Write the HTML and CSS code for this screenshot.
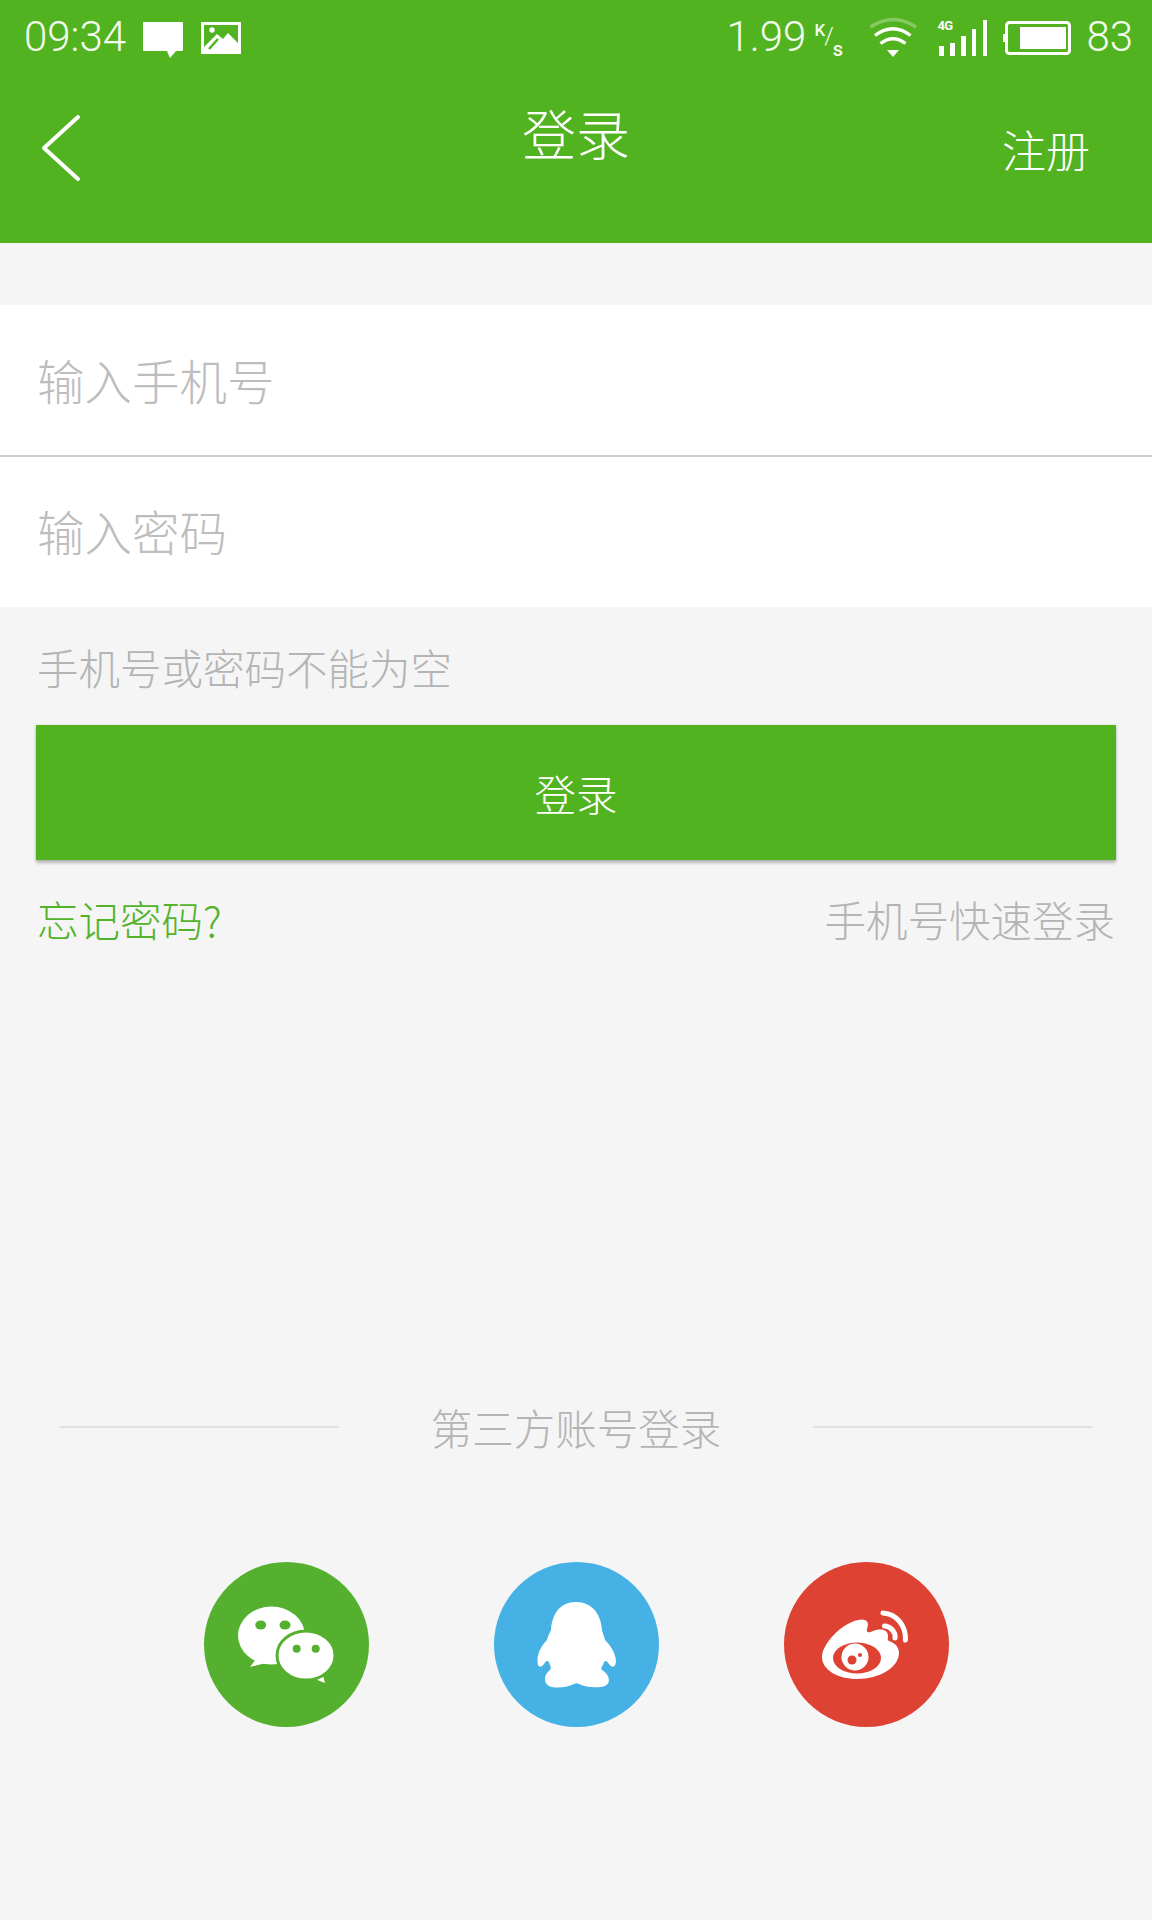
FILE: index.html
```html
<!DOCTYPE html>
<html lang="zh-CN">
<head>
<meta charset="utf-8">
<title>登录</title>
<link rel="stylesheet" href="styles.css">
</head>
<body>
<div class="app">
  <header class="header">
    <div class="status">
      <div class="status-left">
        <span class="num time">09:34</span>
        <svg class="ic-msg" width="40" height="36" viewBox="0 0 40 36"><path d="M1 0H39a1 1 0 0 1 1 1V28a1 1 0 0 1-1 1H33L27 36L24 29H1a1 1 0 0 1-1-1V1a1 1 0 0 1 1-1Z" fill="#fff"/></svg>
        <svg class="ic-img" width="40" height="32" viewBox="0 0 40 32"><path fill-rule="evenodd" d="M0 0H40V32H0ZM3 3V25L16 12L22 17L27 11L37 21V3Z" fill="#fff"/><circle cx="11" cy="8" r="2.7" fill="#fff"/><path d="M8 26L19 15L28 24" fill="none" stroke="#52b320" stroke-width="2.5" opacity="0"/><path d="M8 27L17 17" stroke="#52b320" stroke-width="2.5"/></svg>
      </div>
      <div class="status-right">
        <span class="num speed">1.99</span>
        <span class="unit"><b class="unit-k">K</b><i class="unit-sl">/</i><b class="unit-s">s</b></span>
        <svg class="ic-wifi" width="48" height="42" viewBox="0 0 48 42"><g fill="none" stroke="#fff" stroke-width="3.4"><path d="M0.5 10Q23 -5 46 10" opacity=".3"/><path d="M5 18.5Q23 5 40.500 18.500"/><path d="M10.500 26.500Q23 17 35.500 26.500"/></g><path d="M17 33H29L23 40Z" fill="#fff"/></svg>
        <div class="signal">
          <span class="net">4G</span>
          <i class="bar b1"></i><i class="bar b2"></i><i class="bar b3"></i><i class="bar b4"></i><i class="bar b5"></i>
        </div>
        <svg class="ic-batt" width="68" height="34" viewBox="0 0 68 34"><rect x="3.500" y="1.500" width="63" height="31" rx="3" fill="none" stroke="#fff" stroke-width="3"/><rect x="17" y="6" width="46" height="22" fill="#fff"/><rect x="0" y="13" width="2.500" height="8" fill="#fff"/></svg>
        <span class="num level">83</span>
      </div>
    </div>
    <nav class="nav">
      <svg class="back" width="44" height="70" viewBox="0 0 44 70"><path d="M38 4L4 35L38 66" fill="none" stroke="#fff" stroke-width="4" stroke-linecap="round" stroke-linejoin="round"/></svg>
      <h1 class="title">登录</h1>
      <a class="register">注册</a>
    </nav>
  </header>

  <section class="form">
    <div class="field">输入手机号</div>
    <div class="field field-2">输入密码</div>
  </section>

  <p class="error">手机号或密码不能为空</p>
  <button class="submit">登录</button>

  <div class="links">
    <a class="forgot">忘记密码?</a>
    <a class="quick">手机号快速登录</a>
  </div>

  <div class="third">
    <span class="rule"></span>
    <span class="third-text">第三方账号登录</span>
    <span class="rule"></span>
  </div>

  <div class="socials">
    <svg class="social" width="165" height="165" viewBox="0 0 165 165">
      <circle cx="82.500" cy="82.500" r="82.500" fill="#55b030"/>
      <path d="M46 105L52 97L62 101Z" fill="#fff"/>
      <ellipse cx="67.500" cy="73.500" rx="33.500" ry="29" fill="#fff"/>
      <ellipse cx="56.700" cy="63" rx="5.500" ry="4.500" fill="#55b030"/>
      <ellipse cx="81" cy="63" rx="5.500" ry="4.500" fill="#55b030"/>
      <path d="M121 121L118 110L108 116Z" fill="#fff"/>
      <ellipse cx="102" cy="93.500" rx="29" ry="24.500" fill="#fff" stroke="#55b030" stroke-width="3"/>
      <circle cx="92.700" cy="86.700" r="4" fill="#55b030"/>
      <circle cx="111.700" cy="86.700" r="4" fill="#55b030"/>
    </svg>
    <svg class="social" width="165" height="165" viewBox="0 0 165 165">
      <circle cx="82.500" cy="82.500" r="82.500" fill="#45b1e4"/>
      <path d="M82 40C66 40 58 52 57 68C55 72 54 74 53 78C47 84 43 92 43.500 100C44 106 47 106 50 102C52 99 53 98 55 100C56 104 58 106 56 108C50 112 49 121 55 124C60 126.500 72 126 80 122C81.500 121 83 121 85 122C92 126 106 126 111 124C118 121 115 112 108 108C106 106 109 104 110 100C112 98 113 99 115 102C118 106 121 106 122 100C122 92 117 84 111 78C110 74 109 72 108 68C107 52 98 40 82 40Z" fill="#fff"/>
    </svg>
    <svg class="social" width="165" height="165" viewBox="0 0 165 165">
      <circle cx="82.500" cy="82.500" r="82.500" fill="#dd4233"/>
      <path d="M74 58C82 56 86 60 83 67C82 71 85 71 89 69C98 66 104 68 104 74C104 77 103 78 105 79C111 81 115 85 115 91C115 105 96 117 73 117C54 117 38 108 38 95C38 82 58 61 74 58Z" fill="#fff"/>
      <ellipse cx="73" cy="96" rx="24" ry="15.500" fill="#dd4233"/>
      <circle cx="71" cy="95" r="13.500" fill="#fff"/>
      <circle cx="68" cy="98" r="4.500" fill="#dd4233"/>
      <circle cx="76" cy="93" r="2" fill="#dd4233"/>
      <g fill="none" stroke="#fff" stroke-width="5" stroke-linecap="round">
        <path d="M99 51C113 52 122 64 121.500 78"/>
        <path d="M100.500 64C106 64 112 70 111 76"/>
      </g>
    </svg>
  </div>
</div>
</body>
</html>
```

FILE: styles.css
```css
* { box-sizing: border-box; }
html, body { margin: 0; padding: 0; }
body {
  background: #f5f5f5;
  font-family: "Noto Sans CJK SC", "Noto Sans", Roboto, sans-serif;
  font-weight: 300;
}
.app { width: 1152px; height: 1920px; overflow: hidden; display: flex; flex-direction: column; }

.header { background: #52b320; height: 243px; color: #fff; }
.status { height: 74px; display: flex; justify-content: space-between; align-items: flex-start; padding: 0 19px 0 24px; }
.status-left, .status-right { display: flex; align-items: flex-start; }
.num { font-family: Roboto, sans-serif; font-weight: 300; font-size: 42px; line-height: 50px; margin-top: 12px; color: #f4fbef; }
.ic-msg { margin: 22px 0 0 17px; }
.ic-img { margin: 22px 0 0 18px; }
.unit { display: flex; width: 30px; height: 38px; margin: 21px 0 0 8px; font-family: Roboto, sans-serif; font-style: normal; color: #f4fbef; font-size: 17px; line-height: 18px; position: relative; }
.unit-k { font-weight: 500; }
.unit-sl { font-style: normal; font-size: 24px; line-height: 30px; margin-left: -1px; font-weight: 300; }
.unit-s { font-weight: 500; font-size: 20px; margin-top: 19px; margin-left: -1px; }
.ic-wifi { margin: 17px 0 0 26px; }
.signal { position: relative; width: 50px; height: 36px; margin: 20px 0 0 19px; display: flex; align-items: flex-end; gap: 6.700px; padding-left: 2px; }
.net { position: absolute; left: 0; top: -1px; font: 700 13px/14px Roboto, sans-serif; color: #fff; letter-spacing: -.5px; }
.bar { width: 4.300px; background: #fff; display: block; }
.b1 { height: 10px; } .b2 { height: 13px; } .b3 { height: 20px; } .b4 { height: 27px; } .b5 { height: 36px; }
.ic-batt { margin: 21px 0 0 16px; }
.level { margin-left: 15px; }

.nav { height: 169px; display: flex; align-items: center; justify-content: space-between; padding: 0 62px 0 40px; position: relative; }
.back { margin-top: -21px; }
.title { position: absolute; left: 0; right: 0; top: 20px; margin: 0; text-align: center; font-size: 54px; line-height: 78px; font-weight: 300; }
.register { font-size: 44px; line-height: 60px; margin-top: -19px; }

.form { margin-top: 62px; background: #fff; height: 302px; }
.field { height: 152px; padding-left: 37px; font-size: 47.500px; line-height: 150px; color: #bdbdbd; border-bottom: 2px solid #cfcfcf; }
.field-2 { height: 150px; border-bottom: 0; line-height: 148px; }

.error { margin: 36px 0 0; padding-left: 37px; font-size: 41.500px; line-height: 48px; color: #b4b4b4; }
.submit {
  display: block; margin: 34px 36px 0; width: 1080px; height: 135px; border: 0; padding: 0;
  background: #52b320; color: #fff; font: inherit; font-size: 41.500px;
  box-shadow: 0 3px 3px rgba(0,0,0,.25), 0 0 2px rgba(0,0,0,.12);
}
.links { display: flex; justify-content: space-between; padding: 0 37px; margin-top: 35px; font-size: 41.500px; line-height: 48px; }
.forgot { color: #52b32a; }
.quick { color: #b4b4b4; }

.third { display: flex; align-items: center; justify-content: space-between; padding: 0 60px; margin-top: 460px; height: 48px; }
.rule { width: 279px; height: 2px; background: #e0e0e0; }
.third-text { font-size: 41.500px; line-height: 48px; color: #b4b4b4; }

.socials { display: flex; justify-content: center; gap: 125px; margin-top: 111px; }
.social { display: block; }
```
